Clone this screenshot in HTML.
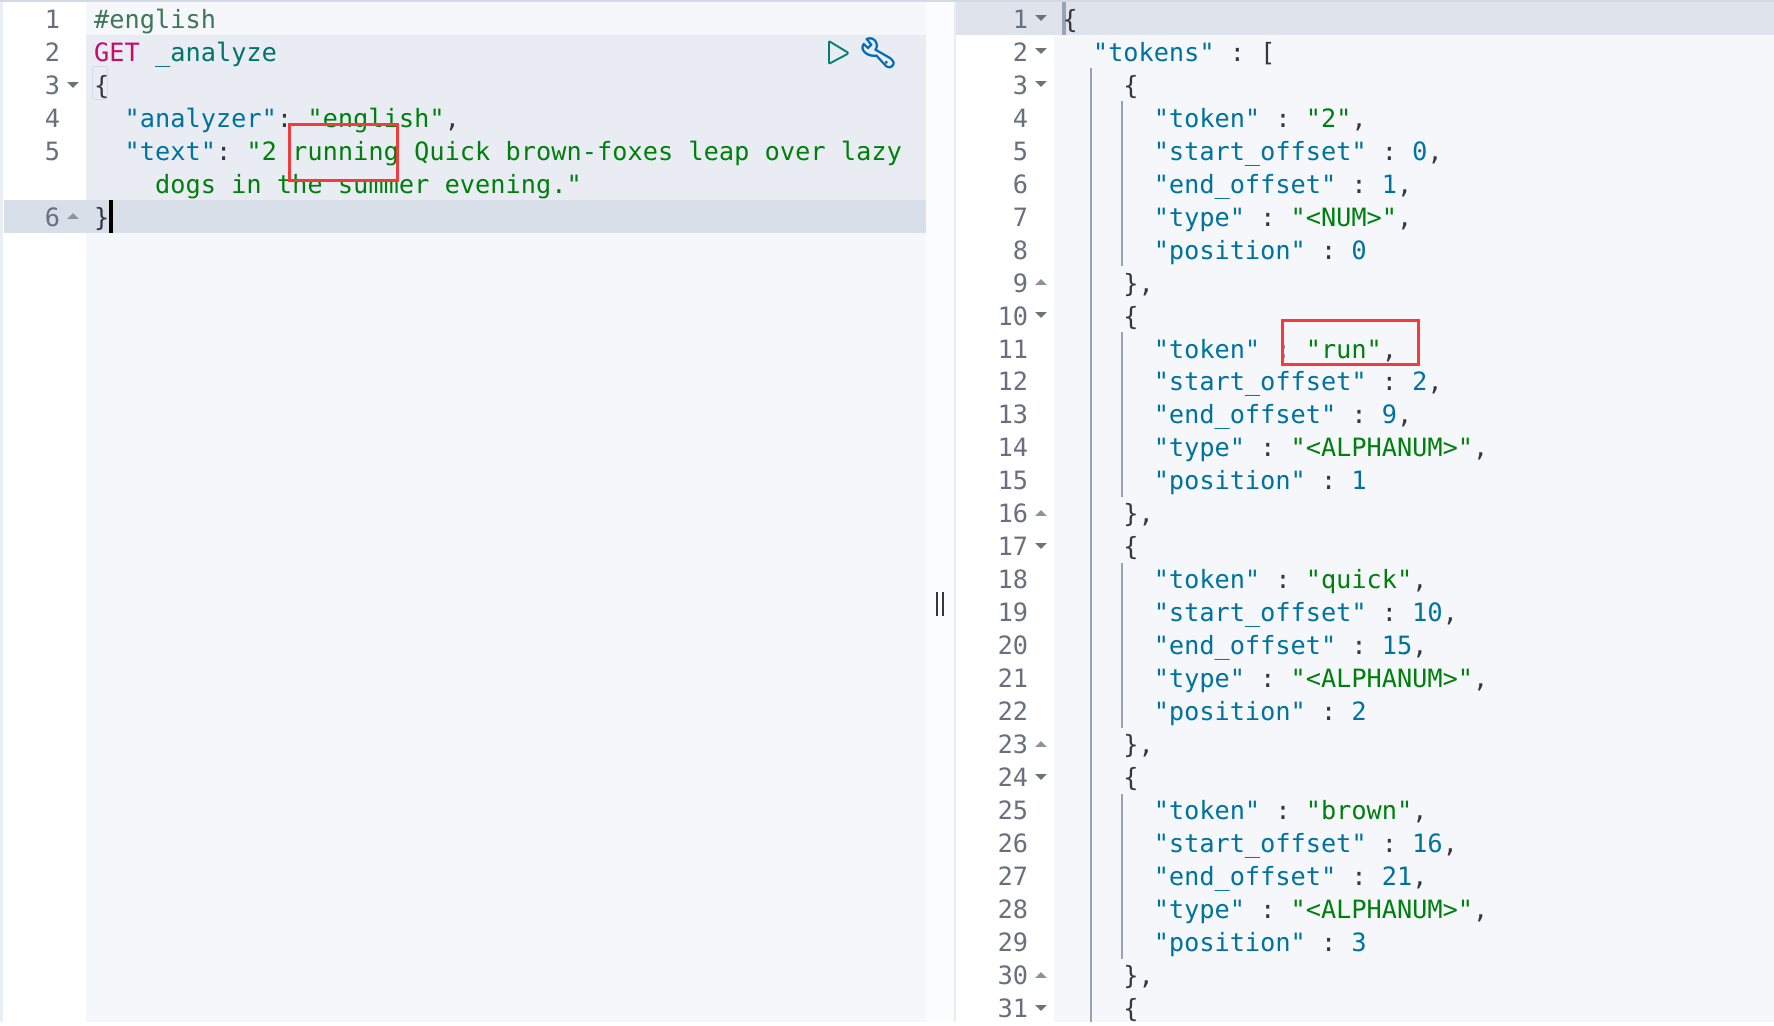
<!DOCTYPE html>
<html>
<head>
<meta charset="utf-8">
<style>
html,body{margin:0;padding:0;width:1774px;height:1022px;overflow:hidden;background:#fff}
.a{position:absolute}
pre{position:absolute;margin:0;font-family:"DejaVu Sans Mono","Liberation Mono",monospace;font-size:25.25px;line-height:32.96px;color:#343741;text-rendering:geometricPrecision;white-space:pre}
.k{color:#00729e}.s{color:#007f0e}.n{color:#00729e}.c{color:#41755c}.m{color:#c80a68}.u{color:#00756c}
.g{color:#69707d;text-align:right}
.d,.v{position:absolute;width:0;height:0;border-left:6px solid transparent;border-right:6px solid transparent}
.d{border-top:6px solid #6e7178}
.v{border-bottom:6px solid #8f9298}
</style>
</head>
<body>
<!-- backgrounds -->
<div class="a" style="left:0;top:0;width:1774px;height:2px;background:#d3dae6"></div>
<div class="a" style="left:0;top:2px;width:3px;height:1020px;background:#ebeef4"></div>
<div class="a" style="left:86px;top:2px;width:840px;height:1020px;background:#f5f7fb"></div>
<div class="a" style="left:926px;top:2px;width:28px;height:1020px;background:#fbfcfd"></div>
<div class="a" style="left:954px;top:2px;width:2px;height:1020px;background:#e9edf3"></div>
<div class="a" style="left:86px;top:35px;width:840px;height:165px;background:#e9edf3"></div>
<div class="a" style="left:4px;top:200px;width:922px;height:33px;background:#d9dfe8"></div>
<div class="a" style="left:1054px;top:2px;width:720px;height:1020px;background:#f5f7fb"></div>
<div class="a" style="left:956px;top:2px;width:818px;height:33px;background:#dee3ec"></div>
<div class="a" style="left:1062px;top:2px;width:4px;height:33px;background:#9aa3b2"></div>
<!-- indent guides -->
<div class="a" style="left:1090px;top:68px;width:2px;height:954px;background:#98a2b3"></div>
<div class="a" style="left:1121px;top:101px;width:2px;height:165px;background:#98a2b3"></div>
<div class="a" style="left:1121px;top:332px;width:2px;height:165px;background:#98a2b3"></div>
<div class="a" style="left:1121px;top:563px;width:2px;height:165px;background:#98a2b3"></div>
<div class="a" style="left:1121px;top:794px;width:2px;height:165px;background:#98a2b3"></div>
<!-- bracket highlight + caret -->
<div class="a" style="left:92px;top:66px;width:14px;height:32px;border:1px solid #d3dae6;border-radius:3px"></div>
<div class="a" style="left:109px;top:200px;width:4px;height:33px;background:#000"></div>

<!-- left gutter -->
<pre class="g" style="left:4px;top:4px;width:56px">1
2
3
4
5

6</pre>
<div class="d" style="left:67px;top:82px"></div>
<div class="v" style="left:67px;top:213px"></div>

<!-- left code -->
<pre style="left:94px;top:4px;letter-spacing:0.04px"><span class="c">#english</span>
<span class="m">GET</span> <span class="u">_analyze</span>
{
  <span class="k">"analyzer"</span>: <span class="s">"english"</span>,
  <span class="k">"text"</span>: <span class="s">"2 running Quick brown-foxes leap over lazy</span>
    <span class="s">dogs in the summer evening."</span>
}</pre>

<!-- right gutter -->
<pre class="g" style="left:956px;top:4px;width:72px">1
2
3
4
5
6
7
8
9
10
11
12
13
14
15
16
17
18
19
20
21
22
23
24
25
26
27
28
29
30
31</pre>
<div class="d" style="left:1035px;top:15px"></div>
<div class="d" style="left:1035px;top:48px"></div>
<div class="d" style="left:1035px;top:81px"></div>
<div class="v" style="left:1035px;top:279px"></div>
<div class="d" style="left:1035px;top:312px"></div>
<div class="v" style="left:1035px;top:510px"></div>
<div class="d" style="left:1035px;top:543px"></div>
<div class="v" style="left:1035px;top:741px"></div>
<div class="d" style="left:1035px;top:774px"></div>
<div class="v" style="left:1035px;top:972px"></div>
<div class="d" style="left:1035px;top:1005px"></div>

<!-- right code -->
<pre style="left:1062.5px;top:4px">{
  <span class="k">"tokens"</span> : [
    {
      <span class="k">"token"</span> : <span class="s">"2"</span>,
      <span class="k">"start_offset"</span> : <span class="n">0</span>,
      <span class="k">"end_offset"</span> : <span class="n">1</span>,
      <span class="k">"type"</span> : <span class="s">"&lt;NUM&gt;"</span>,
      <span class="k">"position"</span> : <span class="n">0</span>
    },
    {
      <span class="k">"token"</span> : <span class="s">"run"</span>,
      <span class="k">"start_offset"</span> : <span class="n">2</span>,
      <span class="k">"end_offset"</span> : <span class="n">9</span>,
      <span class="k">"type"</span> : <span class="s">"&lt;ALPHANUM&gt;"</span>,
      <span class="k">"position"</span> : <span class="n">1</span>
    },
    {
      <span class="k">"token"</span> : <span class="s">"quick"</span>,
      <span class="k">"start_offset"</span> : <span class="n">10</span>,
      <span class="k">"end_offset"</span> : <span class="n">15</span>,
      <span class="k">"type"</span> : <span class="s">"&lt;ALPHANUM&gt;"</span>,
      <span class="k">"position"</span> : <span class="n">2</span>
    },
    {
      <span class="k">"token"</span> : <span class="s">"brown"</span>,
      <span class="k">"start_offset"</span> : <span class="n">16</span>,
      <span class="k">"end_offset"</span> : <span class="n">21</span>,
      <span class="k">"type"</span> : <span class="s">"&lt;ALPHANUM&gt;"</span>,
      <span class="k">"position"</span> : <span class="n">3</span>
    },
    {</pre>

<!-- red boxes -->
<div class="a" style="left:288px;top:123px;width:105px;height:53px;border:3px solid #f43b3b"></div>
<div class="a" style="left:1281px;top:319px;width:133px;height:41px;border:3px solid #f43b3b"></div>

<!-- icons -->
<svg class="a" style="left:826px;top:38px" width="24" height="30" viewBox="0 0 24 30" fill="none">
<path d="M3 4.5Q3 3 4.5 4L21 14Q22.5 15 21 16.2L4.5 25Q3 25.8 3 24.3Z" stroke="#017d73" stroke-width="2" stroke-linejoin="round"/>
</svg>
<svg class="a" style="left:860px;top:36px" width="36" height="36" viewBox="0 0 36 36" fill="none" stroke="#006bb4" stroke-width="2.3" stroke-linejoin="round" stroke-linecap="round">
<path d="M6.7 3Q11.5 1 15 4.5Q18.5 9.5 15.5 13.7L30 22Q35 26 33 29Q30 33 26 30L16.5 19.7Q9 20.5 4.5 16Q1 12 3.7 8L8 12L11.3 8.7Z"/>
<circle cx="26.3" cy="26.3" r="1.4" fill="#006bb4" stroke="none"/>
</svg>

<!-- split handle -->
<div class="a" style="left:936px;top:592px;width:2px;height:24px;background:#343741"></div>
<div class="a" style="left:942px;top:592px;width:2px;height:24px;background:#343741"></div>
</body>
</html>
